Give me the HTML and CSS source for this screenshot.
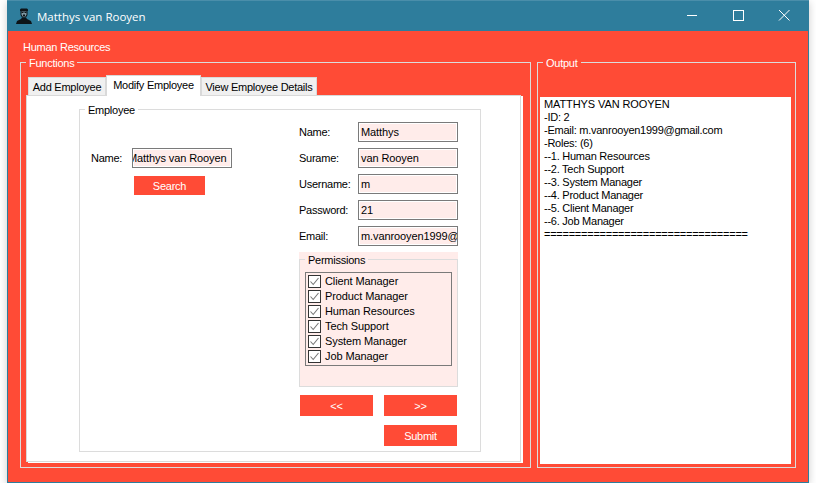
FILE: index.html
```html
<!DOCTYPE html>
<html lang="en">

<head>
    <meta charset="UTF-8">
    <meta name="viewport" content="width=device-width, initial-scale=1.0">
    <title>Matthys van Rooyen</title>
    <link rel="stylesheet" href="styles.css">
</head>

<body>

    <div class="window">
        <div class="titlebar">
            <svg class="title-icon" width="16" height="16" viewBox="0 0 16 16">
                <path fill="#0d1418" d="M4 1.5 L5 0.5 H11 L12 1.5 V3 H11.5 V7 L10 9.5 H6 L4.5 7 V3 H4 Z" />
                <path fill="#0d1418" d="M6 9.5 H10 L11 11 L15 13 L16 16 H0 L1 13 L5 11 Z" />
                <path fill="#7f98a3" d="M5.5 3.5 H10.5 V6.5 L9.5 8.5 H6.5 L5.5 6.5 Z" />
                <path fill="#0d1418" d="M5.5 4 H7.5 V5 H5.5 Z M8.5 4 H10.5 V5 H8.5 Z M7 6.5 H9 V8 H7 Z" />
            </svg>
            <span class="title-text">Matthys van Rooyen</span>
            <div class="win-controls">
                <svg class="win-btn" width="46" height="31" viewBox="0 0 46 31">
                    <path stroke="#fff" fill="none" d="M18 15.5 H28" />
                </svg>
                <svg class="win-btn" width="46" height="31" viewBox="0 0 46 31">
                    <rect x="18.5" y="10.5" width="10" height="10" stroke="#fff" fill="none" />
                </svg>
                <svg class="win-btn" width="46" height="31" viewBox="0 0 46 31">
                    <path stroke="#fff" fill="none" d="M18 10 L28.5 20.5 M28.5 10 L18 20.5" />
                </svg>
            </div>
        </div>

        <div class="main">
            <div class="dept-label">Human Resources</div>

            <div class="groups">
                <fieldset class="group functions">
                    <legend>Functions</legend>

                    <div class="tabs">
                        <div class="tab tab-add">Add Employee</div>
                        <div class="tab tab-modify">Modify Employee</div>
                        <div class="tab tab-view">View Employee Details</div>
                    </div>

                    <div class="tab-panel">
                        <fieldset class="box employee">
                            <legend>Employee</legend>

                            <div class="employee-cols">
                                <div class="search-col">
                                    <div class="row">
                                        <span class="search-label">Name:</span>
                                        <div class="field field-scrolled">Matthys van Rooyen</div>
                                    </div>
                                    <div class="btn btn-search">Search</div>
                                </div>

                                <div class="edit-col">
                                    <div class="row">
                                        <span class="edit-label">Name:</span>
                                        <div class="field">Matthys</div>
                                    </div>
                                    <div class="row">
                                        <span class="edit-label">Surame:</span>
                                        <div class="field">van Rooyen</div>
                                    </div>
                                    <div class="row">
                                        <span class="edit-label">Username:</span>
                                        <div class="field">m</div>
                                    </div>
                                    <div class="row">
                                        <span class="edit-label">Password:</span>
                                        <div class="field">21</div>
                                    </div>
                                    <div class="row">
                                        <span class="edit-label">Email:</span>
                                        <div class="field">m.vanrooyen1999@gmail.com</div>
                                    </div>

                                    <div class="permissions">
                                        <fieldset class="box permissions-box">
                                            <legend>Permissions</legend>
                                            <div class="check-list">
                                                <div class="check-item"><svg class="check" width="13" height="13" viewBox="0 0 13 13"><rect x="0.5" y="0.5" width="12" height="12" fill="#fff" stroke="#333" /><path d="M2.5 6.5 L5.2 9.5 L10.5 3" fill="none" stroke="#777" stroke-width="1.1" /></svg>Client Manager</div>
                                                <div class="check-item"><svg class="check" width="13" height="13" viewBox="0 0 13 13"><rect x="0.5" y="0.5" width="12" height="12" fill="#fff" stroke="#333" /><path d="M2.5 6.5 L5.2 9.5 L10.5 3" fill="none" stroke="#777" stroke-width="1.1" /></svg>Product Manager</div>
                                                <div class="check-item"><svg class="check" width="13" height="13" viewBox="0 0 13 13"><rect x="0.5" y="0.5" width="12" height="12" fill="#fff" stroke="#333" /><path d="M2.5 6.5 L5.2 9.5 L10.5 3" fill="none" stroke="#777" stroke-width="1.1" /></svg>Human Resources</div>
                                                <div class="check-item"><svg class="check" width="13" height="13" viewBox="0 0 13 13"><rect x="0.5" y="0.5" width="12" height="12" fill="#fff" stroke="#333" /><path d="M2.5 6.5 L5.2 9.5 L10.5 3" fill="none" stroke="#777" stroke-width="1.1" /></svg>Tech Support</div>
                                                <div class="check-item"><svg class="check" width="13" height="13" viewBox="0 0 13 13"><rect x="0.5" y="0.5" width="12" height="12" fill="#fff" stroke="#333" /><path d="M2.5 6.5 L5.2 9.5 L10.5 3" fill="none" stroke="#777" stroke-width="1.1" /></svg>System Manager</div>
                                                <div class="check-item"><svg class="check" width="13" height="13" viewBox="0 0 13 13"><rect x="0.5" y="0.5" width="12" height="12" fill="#fff" stroke="#333" /><path d="M2.5 6.5 L5.2 9.5 L10.5 3" fill="none" stroke="#777" stroke-width="1.1" /></svg>Job Manager</div>
                                            </div>
                                        </fieldset>
                                    </div>

                                    <div class="btn-row">
                                        <div class="btn btn-nav">&lt;&lt;</div>
                                        <div class="btn btn-nav">&gt;&gt;</div>
                                    </div>
                                    <div class="btn-row btn-row-end">
                                        <div class="btn btn-nav">Submit</div>
                                    </div>
                                </div>
                            </div>
                        </fieldset>
                    </div>
                </fieldset>

                <fieldset class="group output">
                    <legend>Output</legend>
                    <div class="output-box">
                        <div class="output-heading">MATTHYS VAN ROOYEN</div>
                        <div>-ID: 2</div>
                        <div>-Email: m.vanrooyen1999@gmail.com</div>
                        <div>-Roles: (6)</div>
                        <div>--1. Human Resources</div>
                        <div>--2. Tech Support</div>
                        <div>--3. System Manager</div>
                        <div>--4. Product Manager</div>
                        <div>--5. Client Manager</div>
                        <div>--6. Job Manager</div>
                        <div>=================================</div>
                    </div>
                </fieldset>
            </div>
        </div>
    </div>

</body>

</html>
```

FILE: styles.css
```css
body {
    font-family: "Liberation Sans", Arial, sans-serif;
    font-size: 11px;
    letter-spacing: -0.25px;
    background-color: #fff;
    color: #000;
    margin: 0;
    padding: 0;
    overflow: hidden;
}

fieldset {
    margin: 0;
    min-width: 0;
    box-sizing: border-box;
}

legend {
    padding: 0 3px;
    height: 14px;
    line-height: 16px;
}

.window {
    width: 802px;
    height: 483px;
    margin-left: 7px;
    box-sizing: border-box;
    border: 1px solid #2e7d9c;
    border-top: none;
    background-color: #ff4b36;
    box-shadow: 0 2px 8px rgba(0, 0, 0, 0.2);
}

.titlebar {
    height: 31px;
    margin: 0 -1px;
    display: flex;
    align-items: center;
    background-color: #2e7d9c;
    border-top: 1px solid #4a8eaa;
    box-sizing: border-box;
    color: #fff;
}

.title-icon {
    margin-left: 9px;
}

.title-text {
    margin-left: 5px;
    font-family: "Open Sans", sans-serif;
    font-size: 11.5px;
    letter-spacing: 0;
}

.win-controls {
    margin-left: auto;
    margin-right: 2px;
    display: flex;
    margin-top: -1px;
}

.win-btn {
    display: block;
}

.main {
    padding: 9px 0 0 12px;
    color: #fff;
}

.dept-label {
    line-height: 15px;
    margin-left: 3px;
}

.groups {
    display: flex;
    gap: 6px;
}

.group {
    height: 413px;
    border: 1px solid #dcdcdc;
    color: #fff;
}

.functions {
    width: 511px;
    padding: 6px 7px 4px 5px;
}

.output {
    width: 259px;
    padding: 28px 4px 3px 2px;
}

.output legend {
    margin-left: 3px;
}

.output-box {
    height: 367px;
    box-sizing: border-box;
    padding: 1px 4px 0;
    background-color: #fff;
    color: #000;
    line-height: 13px;
}

.output-heading {
    letter-spacing: -0.1px;
}

.tabs {
    height: 20px;
    padding-left: 2px;
    display: flex;
    align-items: flex-end;
    color: #000;
}

.tab {
    height: 18px;
    box-sizing: border-box;
    border: 1px solid #d9d9d9;
    border-bottom: none;
    background-color: #f0f0f0;
    text-align: center;
    line-height: 18px;
    white-space: nowrap;
}

.tab-add {
    width: 78px;
}

.tab-modify {
    width: 95px;
    height: 21px;
    margin-bottom: -1px;
    background-color: #fff;
    line-height: 18px;
    position: relative;
}

.tab-view {
    width: 116px;
}

.tab-panel {
    width: 495px;
    height: 367px;
    box-sizing: border-box;
    padding: 6px 39px 0 52px;
    border: 1px solid #d9d9d9;
    background-color: #fff;
    box-shadow: 2px 1px 0 #fff;
    color: #000;
}

.box {
    border: 1px solid #dcdcdc;
}

.employee {
    width: 402px;
    height: 350px;
    padding: 0 0 0 11px;
}

.employee > legend {
    margin-left: -6px;
}

.employee-cols {
    display: flex;
}

.search-col {
    width: 208px;
    padding-top: 32px;
}

.edit-col {
    width: 159px;
    padding-top: 6px;
}

.row {
    display: flex;
    align-items: center;
    margin-bottom: 6px;
}

.search-col .row {
    margin-bottom: 8px;
}

.search-label {
    width: 41px;
}

.edit-label {
    width: 59px;
}

.field {
    width: 100px;
    height: 20px;
    box-sizing: border-box;
    padding: 0 2px;
    border: 1px solid #7a7a7a;
    box-shadow: inset 0 0 0 1px #fff;
    background-color: #ffecea;
    letter-spacing: -0.1px;
    line-height: 19px;
    white-space: nowrap;
    overflow: hidden;
}

.field-scrolled {
    text-indent: -7px;
}

.btn {
    background-color: #ff4b36;
    color: #fff;
    text-align: center;
}

.btn-search {
    width: 71px;
    height: 19px;
    margin-left: 43px;
    line-height: 20px;
}

.permissions {
    height: 135px;
    background-color: #ffecea;
}

.permissions-box {
    height: 135px;
    padding: 6px 0 0 5px;
}

.check-list {
    width: 147px;
    height: 94px;
    box-sizing: border-box;
    padding: 1px 0 0 2px;
    border: 1px solid #7a7a7a;
    letter-spacing: -0.1px;
}

.check-item {
    height: 15px;
    display: flex;
    align-items: flex-start;
    gap: 4px;
    line-height: 14px;
}

.check {
    flex-shrink: 0;
    margin-top: 1px;
}

.btn-row {
    display: flex;
    justify-content: space-between;
    padding: 0 1px;
    margin-top: 8px;
}

.btn-row-end {
    justify-content: flex-end;
    margin-top: 9px;
}

.btn-nav {
    width: 73px;
    height: 21px;
    line-height: 22px;
}
```
